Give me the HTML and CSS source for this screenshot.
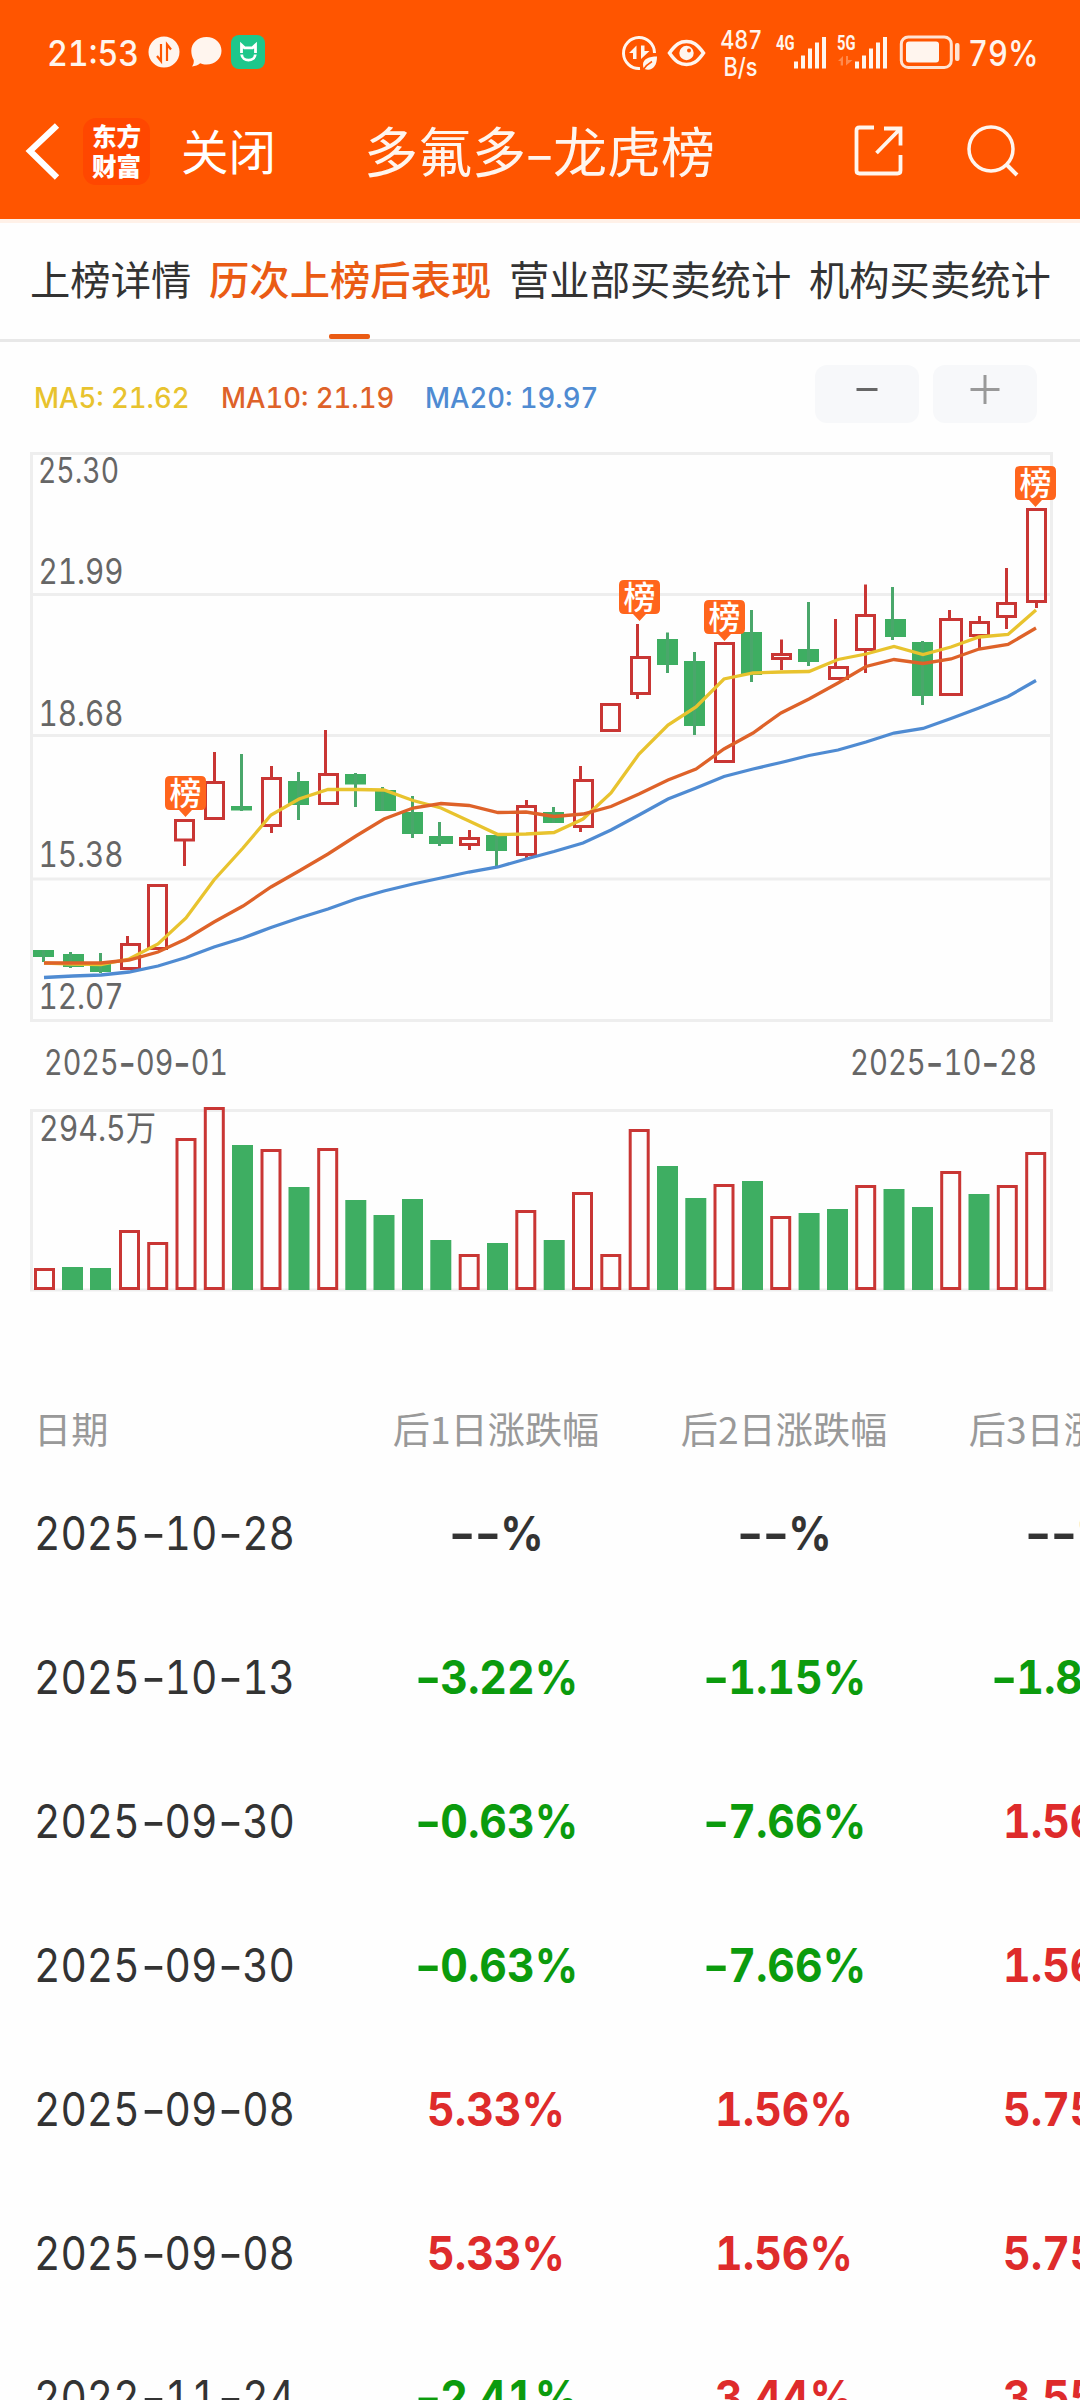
FILE: index.html
```html
<!DOCTYPE html>
<html lang="zh-CN">
<head>
<meta charset="utf-8">
<title>多氟多-龙虎榜</title>
<link rel="stylesheet" href="styles.css">
</head>
<body>
<header class="top">
  <div class="status">
    <span class="clock num">21:53</span>
    <svg class="ic-left" width="118" height="36" viewBox="148 36 118 36">
      <circle cx="164" cy="53" r="15.5" fill="#fff5ee"/>
      <path d="M161 45v17l-4-5M167 62V45.500l4 5" fill="none" stroke="#ff5500" stroke-width="2.200"/>
      <path d="M206.500 38c8.500 0 15 6 15 13.700S215 65.500 206.500 65.500c-2.500 0-4.500-.3-6.300-1.200-2 1.800-5 3-8.200 3.200 1.500-2 2-4 1.700-6.500-1.500-2.500-2.400-5.700-2.400-9.300C191.300 44 198 38 206.500 38z" fill="#fff5ee"/>
      <rect x="231" y="36" width="34" height="34" rx="8" fill="#1ec78b"/>
      <path d="M241.500 54v-8l3 2.800h8l3-2.800v8M241.700 55.500c.5 7.500 13 7.500 13.600 0" fill="none" stroke="#fff" stroke-width="2.800"/>
    </svg>
    <svg class="ic-right" width="88" height="40" viewBox="620 34 88 40">
      <path d="M654.500 54A15.500 15.500 0 1 0 640 69.500" fill="none" stroke="#fff5ee" stroke-width="3"/>
      <path d="M629 54l7.500-7.500V60h-3.500v-6zM641 46.500h3.500V52h5l-8.500 8z" fill="#fff5ee"/>
      <path d="M657 57.500c-8 0-14 2.500-14 8 0 2 .5 3.500 1.500 4.500 7 2.500 12.500-2 12.500-12.500z" fill="#fff5ee"/>
      <path d="M643 71c3-4.500 5.500-6.500 9-8.500" stroke="#ff5500" stroke-width="1.500" fill="none"/>
      <path d="M669.500 54C676 44.500 680.500 42.500 686.500 42.500S697 44.500 703.500 54C697 63.500 692.500 65.500 686.500 65.500S676 63.500 669.500 54z" fill="none" stroke="#fff5ee" stroke-width="3.500"/>
      <circle cx="686.500" cy="54" r="7.200" fill="#fff5ee"/><circle cx="689" cy="51.500" r="2" fill="#ff5500"/>
    </svg>
    <div class="speed"><span class="num">487</span><span class="num">B/s</span></div>
    <svg class="ic-net" width="188" height="40" viewBox="774 34 188 40">
      <g class="gen">
        <text x="776" y="51" textLength="18.500" lengthAdjust="spacingAndGlyphs">4G</text>
        <text x="837" y="51" textLength="18.500" lengthAdjust="spacingAndGlyphs">5G</text>
      </g>
      <path d="M796 62.500v7M803 56.500v13M810 49.500v20M817 43.500v26M824 38v31.500M857 62.500v7M864 56.500v13M871 49.500v20M878 43.500v26M885 38v31.500" stroke="#fff5ee" stroke-width="4"/>
      <path d="M838 62l5-5v9.500h-2.300V62zM846 57h2v4h4.500l-6.500 5.500z" fill="#ff8a4d"/>
      <rect x="901.300" y="38" width="50" height="30.500" rx="7" fill="none" stroke="#ffe3d3" stroke-width="3"/>
      <rect x="906" y="42.500" width="33" height="21" rx="3" fill="#fff5ee"/>
      <rect x="955" y="44" width="4.500" height="18" rx="2" fill="#ffe3d3"/>
    </svg>
    <span class="percent num">79%</span>
  </div>
  <nav class="titlebar">
    <svg class="back" width="34" height="60" viewBox="26 126 34 60"><path d="M57 130.500L30 156l27 26.500" fill="none" stroke="#fff" stroke-width="6.200"/></svg>
    <div class="logo"><span>东方</span><span>财富</span></div>
    <span class="close">关闭</span>
    <h1>多氟多<i>-</i>龙虎榜</h1>
    <svg class="share" width="52" height="52" viewBox="852 126 52 52"><path d="M874 128.500H859.500q-3 0-3 3v40q0 3 3 3h38q3 0 3-3V156M884 129.500h16.500v17M900 130l-23.500 24" fill="none" stroke="#fff5ee" stroke-width="3.800"/></svg>
    <svg class="search" width="54" height="54" viewBox="966 124 54 54"><circle cx="991" cy="149" r="22" fill="none" stroke="#fff5ee" stroke-width="3.500"/><path d="M1006 164l11 11" stroke="#fff5ee" stroke-width="4"/></svg>
  </nav>
</header>
<nav class="tabs">
  <span>上榜详情</span><span class="on">历次上榜后表现</span><span>营业部买卖统计</span><span>机构买卖统计</span>
</nav>
<section class="tools">
  <span class="ma ma5"><b class="num">MA5: 21.62</b></span>
  <span class="ma ma10"><b class="num">MA10: 21.19</b></span>
  <span class="ma ma20"><b class="num">MA20: 19.97</b></span>
  <button class="zoom"><svg width="30" height="30"><path d="M4.500 14.500h21" stroke="#666" stroke-width="3"/></svg></button>
  <button class="zoom"><svg width="30" height="30"><path d="M.5 14.500h29M15 0v29" stroke="#999" stroke-width="3"/></svg></button>
</section>
<svg class="chart" width="1080" height="870" viewBox="0 440 1080 870">
  <!-- price frame and grid -->
  <path d="M31.500 452v569.500M1051.500 452v569.500M30 453.500h1023M30 594.500h1023M30 735.500h1023M30 879h1023M30 1020.500h1023" class="grid"/>
  <!-- volume frame -->
  <path d="M31.500 1109v182M1051.500 1109v182M30 1110.500h1023M30 1290h1023" class="grid"/>
  <g class="axis">
    <text x="38" y="483" textLength="81" lengthAdjust="spacingAndGlyphs">25.30</text>
    <text x="38.500" y="584" textLength="85" lengthAdjust="spacingAndGlyphs">21.99</text>
    <text x="38.500" y="726" textLength="85" lengthAdjust="spacingAndGlyphs">18.68</text>
    <text x="38.500" y="867" textLength="85" lengthAdjust="spacingAndGlyphs">15.38</text>
    <text x="38.500" y="1009" textLength="85" lengthAdjust="spacingAndGlyphs">12.07</text>
    <text x="44" y="1075" textLength="184" lengthAdjust="spacingAndGlyphs">2025<tspan class="hy" dy="4">-</tspan><tspan dy="-4">09</tspan><tspan class="hy" dy="4">-</tspan><tspan dy="-4">01</tspan></text>
    <text x="850" y="1075" textLength="187" lengthAdjust="spacingAndGlyphs">2025<tspan class="hy" dy="4">-</tspan><tspan dy="-4">10</tspan><tspan class="hy" dy="4">-</tspan><tspan dy="-4">28</tspan></text>
    <text x="39" y="1141" textLength="117" lengthAdjust="spacingAndGlyphs">294.5万</text>
  </g>
  <!-- falling candles -->
  <path class="down" d="M33 950h21v7h-21zM63 954h21v13h-21zM90 964h21v8h-21zM231 806h21v4.500h-21zM288 781h21v24h-21zM345 774h21v10.500h-21zM375 790h21v21h-21zM402 812h21v22h-21zM429 836h24v8h-24zM486 835h21v16h-21zM543 812h21v11h-21zM657 639h21v26h-21zM684 661h21v65h-21zM741 632h21v43h-21zM798 649h21v13h-21zM885 619h21v18h-21zM912 642h21v54h-21z"/>
  <path class="downwick" d="M43.500 950V962M70.500 952V968M100.500 953V973M241.500 754V811M298.500 772V820M355.500 773V807M382.500 787V811M412.500 796V838M439.500 822V846M496.500 835V867M553.500 807V823M667.500 632.500V673M694.500 652V735M751.500 610V682M808.500 602V666M892.500 587V640M922.500 641V705"/>
  <!-- rising candles -->
  <path class="up" d="M121.500 944.500h18v24h-18zM148.500 885.500h18v63h-18zM175.500 820.500h18v19.500h-18zM205.500 782.500h18v36h-18zM262.500 778.500h18v47h-18zM319.500 774.500h18v29h-18zM460.500 838.500h18v6h-18zM517.500 806.500h18v48h-18zM574.500 780.500h18v46h-18zM601.500 704.500h18v26h-18zM631.500 657.500h18v36h-18zM715.500 643.500h18v118h-18zM772.500 654.500h18v4h-18zM829.500 667.500h18v11h-18zM856.500 615.500h18v34h-18zM940.500 619.500h21v75h-21zM970.500 622.500h18v13h-18zM997.500 603.500h18v13h-18zM1027.500 509.500h18v92h-18z" id="rise"/>
  <path class="up" d="M127.500 936V943M184.500 841V866M214.500 752V782M271.500 766V777M271.500 827V833M325.500 730V773M469.500 830V837M469.500 846V850M526.500 800V805M526.500 856V858M580.500 766V779M580.500 828V832M637.500 624V656M637.500 695V699M781.500 639.500V653M781.500 660V670M835.500 619V666M865.500 584.500V614M865.500 651V673M949.500 610V618M979.500 616V621M979.500 637V650M1006.500 568V602M1006.500 618V629M1036.500 603V608"/>
  <path class="up fix" d="M461 807"/>
  <!-- moving averages -->
  <polyline class="line" stroke="#4f8bd2" points="44,977.500 73,976 101,975 129,972 158,966 186,957.500 214,947 243,938 271,927.500 299,918 328,909 356,899 384,891 413,884 441,878 469,872 498,867 526,859 554,851.500 583,843 611,830 639,815 668,799 696,788 724,776.500 753,769 781,762.500 809,755.500 838,750 866,742 894,733 923,728.500 951,718.500 979,708 1008,696.500 1036,680.500"/>
  <polyline class="line" stroke="#e8c32e" points="44,963 73,964 101,964.500 129,959 158,944 186,918 214,880 243,848 271,815 299,799 328,789.500 356,789.500 384,790 413,800.500 441,808 469,821 498,834.500 526,834 554,832.500 583,819 611,793 639,754 668,725 696,707 724,679 753,673 781,672 809,671.500 838,659.500 866,654 894,646.500 923,654.500 951,647 979,637 1008,634.500 1036,610"/>
  <polyline class="line" stroke="#de6229" points="44,963 73,963 101,963 129,960 158,952 186,939 214,922 243,906 271,887 299,871 328,854 356,836 384,819 413,808 441,803.500 469,805.500 498,812.500 526,812 554,816.500 583,814 611,806.500 639,794 668,780 696,769 724,749 753,733 781,713 809,699 838,683 866,666.500 894,659.500 923,663.500 951,659 979,649 1008,644.500 1036,628"/>
  <!-- list-day markers -->
  <g class="marks">
    <path d="M170 776h31q5 0 5 5v24q0 5-5 5h-9l-6.500 7-6.500-7h-9q-5 0-5-5v-24q0-5 5-5z"/><text x="169.500" y="805">榜</text>
    <path d="M624 580h31q5 0 5 5v24q0 5-5 5h-9l-6.500 7-6.500-7h-9q-5 0-5-5v-24q0-5 5-5z"/><text x="623.500" y="609">榜</text>
    <path d="M709 600h31q5 0 5 5v24q0 5-5 5h-9l-6.500 7-6.500-7h-9q-5 0-5-5v-24q0-5 5-5z"/><text x="708.500" y="629">榜</text>
    <path d="M1020 466h31q5 0 5 5v24q0 5-5 5h-9l-6.500 7-6.500-7h-9q-5 0-5-5v-24q0-5 5-5z"/><text x="1019.500" y="495">榜</text>
  </g>
  <!-- volume bars -->
  <path class="down" d="M62 1267h21v23h-21zM90 1268h21v22h-21zM232 1145h21v145h-21zM288.500 1187h21v103h-21zM345.300 1200h21v90h-21zM373.500 1215h21v75h-21zM402 1199h21v91h-21zM430.300 1240h21v50h-21zM487 1243h21v47h-21zM543.700 1240h21v50h-21zM657 1166h21v124h-21zM685.300 1198h21v92h-21zM742 1181h21v109h-21zM798.600 1213h21v77h-21zM827 1209h21v81h-21zM883.500 1189h21v101h-21zM912 1207h21v83h-21zM968.500 1194h21v96h-21z"/>
  <path class="up" d="M35.500 1269.500h18v19h-18zM120.500 1231.500h18v57h-18zM148.700 1243.500h18v45h-18zM177 1139.500h18v149h-18zM205.300 1108.500h18v180h-18zM262 1150.500h18v138h-18zM318.700 1149.500h18v139h-18zM460.200 1255.500h18v33h-18zM516.800 1211.500h18v77h-18zM573.500 1193.500h18v95h-18zM601.800 1255.500h18v33h-18zM630.200 1130.500h18v158h-18zM715 1185.500h18v103h-18zM771.700 1217.500h18v71h-18zM856.700 1186.500h18v102h-18zM941.700 1172.500h18v116h-18zM998.300 1186.500h18v102h-18zM1026.700 1153.500h18v135h-18z"/>
</svg>
<section class="table">
  <div class="row head"><span class="date">日期</span><span>后1日涨跌幅</span><span>后2日涨跌幅</span><span>后3日涨跌幅</span></div>
  <div class="row"><span class="date"><b>2025<i>-</i>10<i>-</i>28</b></span><span><b><i>-</i><i>-</i>%</b></span><span><b><i>-</i><i>-</i>%</b></span><span><b><i>-</i><i>-</i>%</b></span></div>
  <div class="row"><span class="date"><b>2025<i>-</i>10<i>-</i>13</b></span><span class="g"><b><i>-</i>3.22%</b></span><span class="g"><b><i>-</i>1.15%</b></span><span class="g"><b><i>-</i>1.86%</b></span></div>
  <div class="row"><span class="date"><b>2025<i>-</i>09<i>-</i>30</b></span><span class="g"><b><i>-</i>0.63%</b></span><span class="g"><b><i>-</i>7.66%</b></span><span class="r"><b>1.56%</b></span></div>
  <div class="row"><span class="date"><b>2025<i>-</i>09<i>-</i>30</b></span><span class="g"><b><i>-</i>0.63%</b></span><span class="g"><b><i>-</i>7.66%</b></span><span class="r"><b>1.56%</b></span></div>
  <div class="row"><span class="date"><b>2025<i>-</i>09<i>-</i>08</b></span><span class="r"><b>5.33%</b></span><span class="r"><b>1.56%</b></span><span class="r"><b>5.75%</b></span></div>
  <div class="row"><span class="date"><b>2025<i>-</i>09<i>-</i>08</b></span><span class="r"><b>5.33%</b></span><span class="r"><b>1.56%</b></span><span class="r"><b>5.75%</b></span></div>
  <div class="row"><span class="date"><b>2022<i>-</i>11<i>-</i>24</b></span><span class="g"><b><i>-</i>2.41%</b></span><span class="r"><b>3.44%</b></span><span class="r"><b>3.55%</b></span></div>
</section>
</body>
</html>
```
FILE: styles.css
```css
* { box-sizing: border-box; }
html, body { height: 2400px; overflow: hidden; }
body {
  margin: 0;
  width: 1080px;
  background: #fefefe;
  color: #333;
  font-family: "Noto Sans CJK SC", sans-serif;
  display: flex;
  flex-direction: column;
}
svg { display: block; flex: none; overflow: visible; }

.num {
  display: inline-block;
  font-family: Inter, sans-serif;
  font-feature-settings: "tnum";
  transform-origin: left center;
  white-space: nowrap;
}

/* orange header */
.top { flex: none; height: 223px; background: #ff5500; border-bottom: 4px solid #fff1e8; color: #fff5ee; }
.status { display: flex; align-items: center; height: 106px; padding-left: 47px; }
.clock { width: 101px; font-size: 35px; font-weight: 500; transform: scaleX(.92); }
.ic-right { margin-left: 354px; }
.speed { display: flex; flex-direction: column; align-items: center; width: 66px; padding-top: 1px; font-size: 25px; line-height: 27px; font-weight: 500; }
.speed .num { transform: scaleX(.87); transform-origin: center; }
.gen { fill: #fff5ee; font: 700 20px Roboto, sans-serif; }
.percent { margin-left: 6px; font-size: 35px; font-weight: 500; transform: scaleX(.88); }

.titlebar { display: flex; align-items: center; height: 90px; padding-left: 26px; }
.logo {
  display: flex; flex-direction: column; justify-content: center; align-items: center;
  width: 67px; height: 67px; margin-left: 23px; border-radius: 13px;
  background: #ff4700; color: #fff; font-size: 24.500px; line-height: 30px; font-weight: 900;
}
.close { width: 183px; margin-left: 31px; padding-bottom: 3px; font-size: 47.500px; line-height: 60px; color: #fff; }
h1 { margin: 0; width: 488px; padding-bottom: 2px; font-size: 54px; line-height: 64px; font-weight: 400; display: flex; }
h1 i { font-style: normal; width: 27px; text-align: center; transform: scaleX(1.6); }
.search { margin-left: 62px; }

/* tabs */
.tabs {
  flex: none; display: flex; gap: 17.700px; height: 119px; padding: 25px 0 0 30px;
  border-bottom: 3px solid #e8e8e8; font-size: 40.330px; line-height: 60px; white-space: nowrap;
}
.tabs .on { position: relative; color: #ea5b14; font-weight: 500; }
.tabs .on::after {
  content: ""; position: absolute; left: 120px; bottom: 0; width: 41px; height: 5px;
  border-radius: 2px; background: #ea5b14;
}

/* moving-average legend and zoom buttons */
.tools { flex: none; display: flex; height: 98px; padding: 23px 43px 0 34px; }
.ma { flex: none; font-size: 28px; line-height: 62px; }
.ma .num { font-weight: 500; transform: scaleX(.98); }
.ma5 { width: 187px; color: #e8c32e; }
.ma10 { width: 204px; color: #de6229; }
.ma20 { width: 390px; color: #4f8bd2; }
.zoom {
  flex: none; display: flex; justify-content: center; width: 104px; height: 58px; margin: 0 14px 0 0; padding: 10px 0 0;
  border: 0; border-radius: 12px; background: #f7f8fa;
}

/* chart */
.grid { fill: none; stroke: #eee; stroke-width: 3; }
.axis { fill: #666; font: 35px Inter, "Noto Sans CJK SC", sans-serif; font-feature-settings: "tnum"; }
.hy { font-size: 46px; font-feature-settings: "tnum" 0; }
.down { fill: #3eae62; }
.downwick { fill: none; stroke: #4aa76b; stroke-width: 3; }
.up { fill: none; stroke: #c93634; stroke-width: 3; }
.line { fill: none; stroke-width: 3.300; }
.marks path { fill: #ff651c; }
.marks text { fill: #fff; font: 500 32px "Noto Sans CJK SC", sans-serif; }

/* performance table */
.table { flex: none; height: 1090px; padding-top: 79px; overflow: hidden; }
.row { display: flex; align-items: center; width: 1300px; height: 144px; }
.row span { flex: none; width: 288px; text-align: center; }
.row .date { width: 352px; padding-left: 34px; text-align: left; }
.head { height: 72px; padding-top: 6px; color: #999; font-size: 37.200px; }
.row b {
  display: inline-block; font: 650 46.500px Inter, sans-serif; font-feature-settings: "tnum";
  transform: scaleX(.92); white-space: nowrap;
}
.row .date b { font-weight: 400; transform: scaleX(.876); transform-origin: left center; }
.row i { display: inline-block; font-style: normal; width: .61em; text-align: center; transform: scaleX(1.35); }
.g { color: #0b9b0d; }
.r { color: #de2b2b; }
```
